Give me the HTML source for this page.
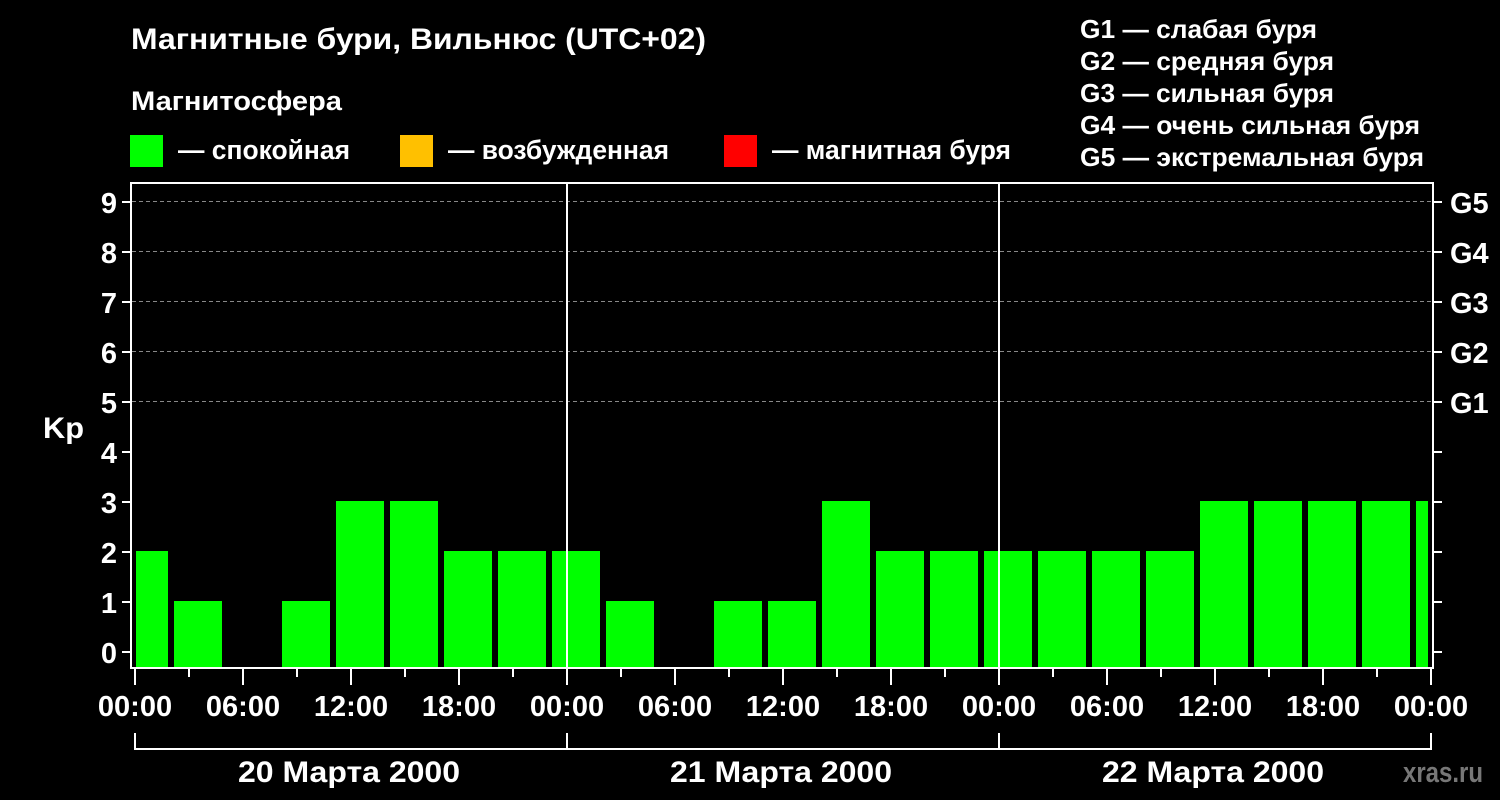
<!DOCTYPE html>
<html><head><meta charset="utf-8"><style>
html,body{margin:0;padding:0;background:#000;}
svg{display:block;}
text{font-family:"Liberation Sans",Arial,sans-serif;font-weight:bold;fill:#fff;}
</style></head><body>
<svg width="1500" height="800" viewBox="0 0 1500 800" xmlns="http://www.w3.org/2000/svg">
<rect width="1500" height="800" fill="#000"/>
<text x="131" y="49" font-size="30" textLength="575" lengthAdjust="spacingAndGlyphs">Магнитные бури, Вильнюс (UTC+02)</text>
<text x="131" y="110" font-size="27" textLength="211" lengthAdjust="spacingAndGlyphs">Магнитосфера</text>
<rect x="130" y="135" width="33" height="32" fill="#00ff00"/>
<text x="178" y="159" font-size="27" textLength="172" lengthAdjust="spacingAndGlyphs">— спокойная</text>
<rect x="400" y="135" width="33" height="32" fill="#ffc000"/>
<text x="448" y="159" font-size="27" textLength="221" lengthAdjust="spacingAndGlyphs">— возбужденная</text>
<rect x="724" y="135" width="33" height="32" fill="#ff0000"/>
<text x="772" y="159" font-size="27" textLength="239" lengthAdjust="spacingAndGlyphs">— магнитная буря</text>
<g font-size="26">
<text x="1080" y="38" textLength="237" lengthAdjust="spacingAndGlyphs">G1 — слабая буря</text>
<text x="1080" y="70" textLength="254" lengthAdjust="spacingAndGlyphs">G2 — средняя буря</text>
<text x="1080" y="102" textLength="254" lengthAdjust="spacingAndGlyphs">G3 — сильная буря</text>
<text x="1080" y="134" textLength="340" lengthAdjust="spacingAndGlyphs">G4 — очень сильная буря</text>
<text x="1080" y="166" textLength="344" lengthAdjust="spacingAndGlyphs">G5 — экстремальная буря</text>
</g>
<g stroke="#888" stroke-width="1" stroke-dasharray="4,3">
<line x1="132" y1="201.5" x2="1432" y2="201.5"/>
<line x1="132" y1="251.5" x2="1432" y2="251.5"/>
<line x1="132" y1="301.5" x2="1432" y2="301.5"/>
<line x1="132" y1="351.5" x2="1432" y2="351.5"/>
<line x1="132" y1="401.5" x2="1432" y2="401.5"/>
</g>
<g fill="#00ff00">
<rect x="136" y="551" width="32" height="117"/>
<rect x="174" y="601" width="48" height="67"/>
<rect x="282" y="601" width="48" height="67"/>
<rect x="336" y="501" width="48" height="167"/>
<rect x="390" y="501" width="48" height="167"/>
<rect x="444" y="551" width="48" height="117"/>
<rect x="498" y="551" width="48" height="117"/>
<rect x="552" y="551" width="48" height="117"/>
<rect x="606" y="601" width="48" height="67"/>
<rect x="714" y="601" width="48" height="67"/>
<rect x="768" y="601" width="48" height="67"/>
<rect x="822" y="501" width="48" height="167"/>
<rect x="876" y="551" width="48" height="117"/>
<rect x="930" y="551" width="48" height="117"/>
<rect x="984" y="551" width="48" height="117"/>
<rect x="1038" y="551" width="48" height="117"/>
<rect x="1092" y="551" width="48" height="117"/>
<rect x="1146" y="551" width="48" height="117"/>
<rect x="1200" y="501" width="48" height="167"/>
<rect x="1254" y="501" width="48" height="167"/>
<rect x="1308" y="501" width="48" height="167"/>
<rect x="1362" y="501" width="48" height="167"/>
<rect x="1416" y="501" width="12" height="167"/>
</g>
<g stroke="#fff" stroke-width="2" fill="none">
<rect x="131" y="183" width="1302" height="485"/>
<line x1="567" y1="183" x2="567" y2="668"/>
<line x1="999" y1="183" x2="999" y2="668"/>
<path d="M122 652H131M122 602H131M122 552H131M122 502H131M122 452H131M122 402H131M122 352H131M122 302H131M122 252H131M122 202H131"/>
<path d="M1433 652H1442M1433 602H1442M1433 552H1442M1433 502H1442M1433 452H1442M1433 402H1442M1433 352H1442M1433 302H1442M1433 252H1442M1433 202H1442"/>
<path d="M135 669V685M243 669V685M351 669V685M459 669V685M567 669V685M675 669V685M783 669V685M891 669V685M999 669V685M1107 669V685M1215 669V685M1323 669V685M1431 669V685"/>
<path d="M189 669V677M297 669V677M405 669V677M513 669V677M621 669V677M729 669V677M837 669V677M945 669V677M1053 669V677M1161 669V677M1269 669V677M1377 669V677"/>
<path d="M135 733V749H1431V733M567 733V749M999 733V749"/>
</g>
<g font-size="29" text-anchor="end">
<text x="117" y="663">0</text><text x="117" y="613">1</text><text x="117" y="563">2</text>
<text x="117" y="513">3</text><text x="117" y="463">4</text><text x="117" y="413">5</text>
<text x="117" y="363">6</text><text x="117" y="313">7</text><text x="117" y="263">8</text>
<text x="117" y="213">9</text>
</g>
<text x="43" y="438" font-size="30" textLength="41" lengthAdjust="spacingAndGlyphs">Kp</text>
<g font-size="29">
<text x="1450" y="413">G1</text><text x="1450" y="363">G2</text><text x="1450" y="313">G3</text>
<text x="1450" y="263">G4</text><text x="1450" y="213">G5</text>
</g>
<g font-size="29" text-anchor="middle">
<text x="135" y="716">00:00</text><text x="243" y="716">06:00</text><text x="351" y="716">12:00</text>
<text x="459" y="716">18:00</text><text x="567" y="716">00:00</text><text x="675" y="716">06:00</text>
<text x="783" y="716">12:00</text><text x="891" y="716">18:00</text><text x="999" y="716">00:00</text>
<text x="1107" y="716">06:00</text><text x="1215" y="716">12:00</text><text x="1323" y="716">18:00</text>
<text x="1431" y="716">00:00</text>
</g>
<g font-size="30" text-anchor="middle">
<text x="349" y="782" textLength="222" lengthAdjust="spacingAndGlyphs">20 Марта 2000</text>
<text x="781" y="782" textLength="222" lengthAdjust="spacingAndGlyphs">21 Марта 2000</text>
<text x="1213" y="782" textLength="222" lengthAdjust="spacingAndGlyphs">22 Марта 2000</text>
</g>
<text x="1403" y="782" font-size="29" style="fill:#777" textLength="80" lengthAdjust="spacingAndGlyphs">xras.ru</text>
</svg>
</body></html>
